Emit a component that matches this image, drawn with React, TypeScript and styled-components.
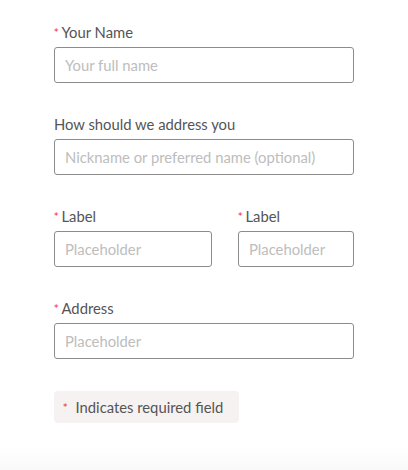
import React from 'react';
import styled, { createGlobalStyle } from 'styled-components';

const GlobalStyle = createGlobalStyle`
  html, body {
    margin: 0;
    padding: 0;
    background: #ffffff;
  }
  body {
    font-family: Lato, "Noto Sans", "Liberation Sans", sans-serif;
  }
`;

const Page = styled.div`
  width: 408px;
  height: 470px;
  box-sizing: border-box;
  padding: 22px 54px 0;
  background: linear-gradient(to bottom, #ffffff 0, #ffffff 446px, #f9f9f9 470px);
`;

const Form = styled.form`
  width: 300px;
  display: flex;
  flex-direction: column;
  gap: 31px;
`;

const Row = styled.div`
  display: flex;
  gap: 26px;
`;

const Field = styled.div<{ width?: number }>`
  display: flex;
  flex-direction: column;
  gap: 5px;
  width: ${p => (p.width ? `${p.width}px` : '100%')};
`;

const Label = styled.label`
  display: flex;
  align-items: center;
  height: 20px;
  font-size: 14.8px;
  color: #555555;
`;

const Star = styled.span`
  color: #f0203a;
  font-family: "DejaVu Sans", sans-serif;
  font-size: 9px;
  margin-right: 3px;
  position: relative;
  top: 0;
`;

const Input = styled.input`
  box-sizing: border-box;
  width: 100%;
  height: 36px;
  padding: 0 10px 1px;
  border: 1px solid #8c8c8c;
  border-radius: 3px;
  font-family: inherit;
  font-size: 14.8px;
  color: #333;
  outline: none;
  &::placeholder {
    color: #bdbdbd;
  }
`;

const Note = styled.div`
  align-self: flex-start;
  display: flex;
  align-items: center;
  height: 32px;
  padding: 0 16px 0 9px;
  margin-top: 1px;
  background: #f6f2f2;
  border-radius: 4px;
  font-size: 14.8px;
  color: #555555;
`;

const NoteStar = styled(Star)`
  margin: 0 8px 0 0;
`;

interface FieldProps {
  label: string;
  placeholder: string;
  required?: boolean;
  width?: number;
}

const FormField: React.FC<FieldProps> = ({ label, placeholder, required, width }) => (
  <Field width={width}>
    <Label>
      {required && <Star>*</Star>}
      {label}
    </Label>
    <Input placeholder={placeholder} />
  </Field>
);

export default function App() {
  return (
    <Page>
      <GlobalStyle />
      <Form onSubmit={e => e.preventDefault()}>
        <FormField required label="Your Name" placeholder="Your full name" />
        <FormField label="How should we address you" placeholder="Nickname or preferred name (optional)" />
        <Row>
          <FormField required label="Label" placeholder="Placeholder" width={158} />
          <FormField required label="Label" placeholder="Placeholder" width={116} />
        </Row>
        <FormField required label="Address" placeholder="Placeholder" />
        <Note>
          <NoteStar>*</NoteStar>
          Indicates required field
        </Note>
      </Form>
    </Page>
  );
}
